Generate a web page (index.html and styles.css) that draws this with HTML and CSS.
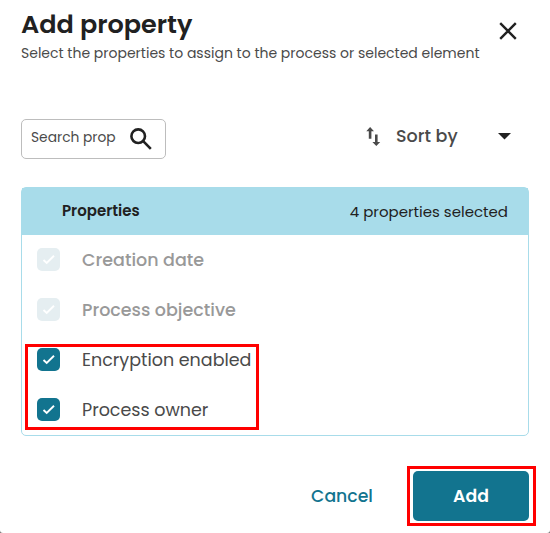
FILE: index.html
```html
<!DOCTYPE html>
<html lang="en">
  <head>
    <meta charset="UTF-8" />
    <title>Add property</title>
    <link rel="stylesheet" href="styles.css">
  </head>
  <body>
    <div class="dialog">
      <div class="dialog-header">
        <div>
          <h1>Add property</h1>
          <p class="subtitle">Select the properties to assign to the process or selected element</p>
        </div>
        <button class="close-button" aria-label="Close">
          <svg width="18" height="18" viewBox="0 0 18 18">
            <path d="M1.2 1.2 16.8 16.8M16.8 1.2 1.2 16.8" />
          </svg>
        </button>
      </div>

      <div class="toolbar">
        <div class="search">
          <span class="search-text">Search properties</span>
          <svg width="22" height="22" viewBox="0 0 22 22">
            <circle cx="8.2" cy="8.2" r="6.8" />
            <path d="M13.2 13.2 20.8 20.8" />
          </svg>
        </div>
        <div class="sort">
          <svg class="sort-icon" width="15" height="19" viewBox="0 0 15 19">
            <path d="M.3 4.3 4.1 0 8 4.3H5.4V11.7H2.8V4.3ZM6.4 14.9H9V7.4H11.6V14.9H14.2L10.3 19Z" />
          </svg>
          <span class="sort-label">Sort by</span>
          <svg class="caret" width="13" height="7" viewBox="0 0 13 7">
            <path d="M0 0H13L6.5 6.5Z" />
          </svg>
        </div>
      </div>

      <div class="properties">
        <div class="properties-header">
          <span class="properties-title">Properties</span>
          <span class="properties-count">4 properties selected</span>
        </div>
        <div class="property disabled">
          <span class="checkbox"><svg width="23" height="23" viewBox="0 0 23 23"><path d="M6.5 12 9.7 15 17 7.8" /></svg></span>
          <span class="property-name">Creation date</span>
        </div>
        <div class="property disabled">
          <span class="checkbox"><svg width="23" height="23" viewBox="0 0 23 23"><path d="M6.5 12 9.7 15 17 7.8" /></svg></span>
          <span class="property-name">Process objective</span>
        </div>
        <div class="property">
          <span class="checkbox"><svg width="23" height="23" viewBox="0 0 23 23"><path d="M6.5 12 9.7 15 17 7.8" /></svg></span>
          <span class="property-name">Encryption enabled</span>
        </div>
        <div class="property">
          <span class="checkbox"><svg width="23" height="23" viewBox="0 0 23 23"><path d="M6.5 12 9.7 15 17 7.8" /></svg></span>
          <span class="property-name">Process owner</span>
        </div>
        <div class="highlight highlight-list"></div>
      </div>

      <div class="dialog-footer">
        <button class="btn-cancel">Cancel</button>
        <div class="add-wrap">
          <button class="btn-primary">Add</button>
          <div class="highlight highlight-add"></div>
        </div>
      </div>
    </div>
  </body>
</html>
```
FILE: styles.css
```css
* {
  box-sizing: border-box;
}

body {
  margin: 0;
  font-family: Poppins, Inter, "Liberation Sans", sans-serif;
  color: #4a4a4a;
  background-color: #777;
}

button {
  font-family: inherit;
  border: none;
  background: none;
  padding: 0;
}

.dialog {
  height: 533px;
  padding: 7px 21px 0;
  overflow: hidden;
  background-color: #fff;
  border-radius: 0 0 3px 3px;
}

.dialog-header {
  display: flex;
  justify-content: space-between;
  height: 112px;
}

h1 {
  margin: 0;
  font-size: 25.5px;
  font-weight: 600;
  line-height: 34px;
  color: #212121;
  white-space: nowrap;
}

.subtitle {
  margin: 2px 0 0;
  font-size: 14px;
  line-height: 20px;
  white-space: nowrap;
}

.close-button {
  width: 18px;
  height: 18px;
  margin: 15px 12px 0 0;
}

.close-button svg {
  display: block;
  fill: none;
  stroke: #212121;
  stroke-width: 2.4;
}

.toolbar {
  display: flex;
  justify-content: space-between;
  height: 68px;
}

.search {
  display: flex;
  width: 145px;
  height: 40px;
  padding: 0 13px 0 9px;
  align-items: center;
  justify-content: space-between;
  border: 1px solid #bdbdbd;
  border-radius: 5px;
}

.search-text {
  width: 85px;
  margin-bottom: 3px;
  overflow: hidden;
  font-size: 13.8px;
  line-height: 20px;
  white-space: nowrap;
}

.search svg {
  fill: none;
  stroke: #212121;
  stroke-width: 2.6;
}

.sort {
  display: flex;
  width: 163px;
  height: 34px;
  align-items: center;
}

.sort-icon {
  fill: #4a4a4a;
}

.sort-label {
  width: 62px;
  margin-left: 15px;
  font-size: 17.5px;
  font-weight: 500;
  white-space: nowrap;
}

.caret {
  margin-left: 40px;
  fill: #212121;
}

.properties {
  position: relative;
  height: 249px;
  border: 1px solid #a8dcea;
  border-radius: 5px;
}

.properties-header {
  display: flex;
  height: 47px;
  padding: 0 20px 0 40px;
  align-items: center;
  justify-content: space-between;
  background-color: #a8dcea;
  color: #212121;
  font-size: 15px;
}

.properties-title {
  margin-bottom: 2px;
  font-weight: 600;
}

.property {
  display: flex;
  height: 50px;
  padding-left: 15px;
  align-items: center;
}

.checkbox {
  width: 23px;
  height: 23px;
  margin: 0 22px 1px 0;
  border-radius: 5px;
  background-color: #12748f;
}

.checkbox svg {
  display: block;
  fill: none;
  stroke: #fff;
  stroke-width: 1.9;
}

.property-name {
  font-size: 17.5px;
  white-space: nowrap;
}

.disabled .checkbox {
  background-color: #e5eef1;
}

.disabled .property-name {
  color: #999;
  font-weight: 500;
}

.dialog-footer {
  display: flex;
  justify-content: flex-end;
  padding-top: 35px;
}

.btn-cancel {
  width: 62px;
  height: 50px;
  margin-right: 40px;
  color: #12748f;
  font-size: 17.3px;
  font-weight: 500;
  white-space: nowrap;
}

.add-wrap {
  position: relative;
}

.btn-primary {
  display: block;
  width: 116px;
  height: 50px;
  border-radius: 5px;
  background-color: #12748f;
  color: #fff;
  font-size: 17.3px;
  font-weight: 600;
}

.highlight {
  position: absolute;
  border: 3px solid #f00;
}

.highlight-list {
  top: 156px;
  left: 3px;
  width: 234px;
  height: 86px;
}

.highlight-add {
  top: -5px;
  left: -6px;
  width: 129px;
  height: 60px;
}
```
